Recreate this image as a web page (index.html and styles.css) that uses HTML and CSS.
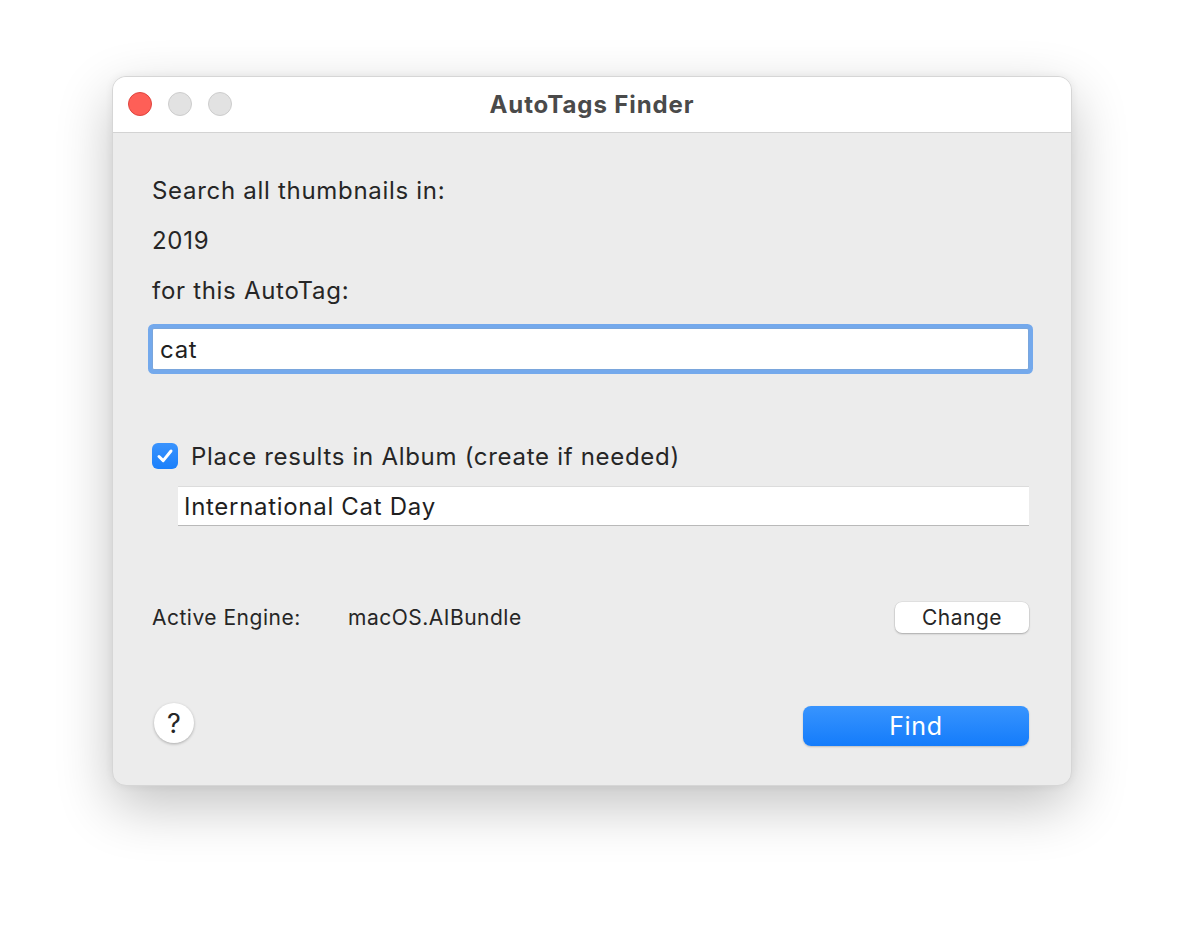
FILE: index.html
```html
<!DOCTYPE html>
<html lang="en">
<head>
    <meta charset="UTF-8">
    <meta name="viewport" content="width=device-width, initial-scale=1.0">
    <title>AutoTags Finder</title>
    <link rel="stylesheet" href="styles.css">
</head>
<body>
    <div class="window">
        <div class="titlebar">
            <div class="lights">
                <span class="light close"></span>
                <span class="light"></span>
                <span class="light"></span>
            </div>
            <div class="title">AutoTags Finder</div>
        </div>
        <div class="content">
            <div class="label">Search all thumbnails in:</div>
            <div class="label">2019</div>
            <div class="label">for this AutoTag:</div>
            <input class="tag-field" type="text" value="cat">

            <label class="check-row">
                <span class="checkbox">
                    <svg width="20" height="20" viewBox="0 0 20 20">
                        <path d="M4 10.5 L8.2 14.6 L16 5" fill="none" stroke="#fff" stroke-width="3" stroke-linecap="round" stroke-linejoin="round"/>
                    </svg>
                </span>
                <span>Place results in Album (create if needed)</span>
            </label>
            <input class="album-field" type="text" value="International Cat Day">

            <div class="engine-row">
                <span class="engine-label">Active Engine:</span>
                <span class="engine-name">macOS.AIBundle</span>
                <button class="btn change">Change</button>
            </div>

            <div class="bottom-row">
                <button class="help">?</button>
                <button class="btn find">Find</button>
            </div>
        </div>
    </div>
</body>
</html>
```
FILE: styles.css
```css
body {
    margin: 0;
    padding: 76px 0 0 112px;
    min-height: 100vh;
    box-sizing: border-box;
    background-color: #fff;
    font-family: Inter, "Noto Sans", sans-serif;
    color: #262626;
}
.window {
    width: 960px;
    height: 710px;
    box-sizing: border-box;
    background-color: #ececec;
    border: 1px solid #d6d6d6;
    border-radius: 14px;
    overflow: hidden;
    box-shadow: 0 20px 55px rgba(0, 0, 0, 0.24), 0 0 8px rgba(0, 0, 0, 0.06);
}
.titlebar {
    position: relative;
    height: 55px;
    background-color: #fff;
    border-bottom: 1px solid #d3d3d3;
    display: flex;
    align-items: center;
    justify-content: center;
}
.lights {
    position: absolute;
    left: 15px;
    top: 15px;
    display: flex;
    gap: 16px;
}
.light {
    width: 22px;
    height: 22px;
    border-radius: 50%;
    background-color: #e2e2e2;
    border: 1px solid #cdcdcd;
}
.light.close {
    background-color: #fe5f57;
    border-color: #e0443e;
}
.title {
    font-size: 24px;
    font-weight: 700;
    letter-spacing: 0.9px;
    color: #4a4a4a;
}
.content {
    padding: 33px 42px 0 39px;
    display: flex;
    flex-direction: column;
    letter-spacing: 0.7px;
}
.label {
    font-size: 24px;
    line-height: 50px;
}
.tag-field {
    margin-top: 12px;
    height: 42px;
    box-sizing: border-box;
    border: 1px solid #7aa6dc;
    border-radius: 2px;
    box-shadow: 0 0 0 4px #74a9ec;
    padding: 0 7px;
    font-family: inherit;
    font-size: 24px;
    letter-spacing: 0.7px;
    color: #1f1f1f;
    outline: none;
}
.check-row {
    margin-top: 73px;
    height: 26px;
    display: flex;
    align-items: center;
    gap: 13px;
    font-size: 24px;
}
.checkbox {
    width: 26px;
    height: 26px;
    border-radius: 6px;
    background: linear-gradient(#3a93fd, #1b80fb);
    display: flex;
    align-items: center;
    justify-content: center;
}
.album-field {
    margin: 17px 0 0 26px;
    height: 40px;
    box-sizing: border-box;
    border: none;
    border-top: 1px solid #dcdcdc;
    border-bottom: 1px solid #b9b9b9;
    background-color: #fff;
    padding: 0 6px;
    font-family: inherit;
    font-size: 24px;
    letter-spacing: 0.7px;
    color: #1f1f1f;
    outline: none;
}
.engine-row {
    margin-top: 76px;
    height: 31px;
    display: flex;
    align-items: center;
    font-size: 21px;
    letter-spacing: 0.5px;
}
.engine-label {
    width: 196px;
}
.engine-name {
    flex: 1;
}
.btn {
    font-family: inherit;
    border: none;
    cursor: pointer;
}
.change {
    width: 134px;
    height: 31px;
    border-radius: 7px;
    background-color: #fff;
    font-size: 21px;
    letter-spacing: 0.5px;
    color: #262626;
    box-shadow: 0 1px 2px rgba(0, 0, 0, 0.25), 0 0 0 0.5px rgba(0, 0, 0, 0.08);
}
.bottom-row {
    margin-top: 70px;
    display: flex;
    align-items: flex-start;
    justify-content: space-between;
}
.help {
    width: 40px;
    height: 40px;
    margin-left: 2px;
    border-radius: 50%;
    border: none;
    background-color: #fff;
    font-family: inherit;
    font-size: 27px;
    color: #262626;
    box-shadow: 0 1px 3px rgba(0, 0, 0, 0.28);
    padding: 0;
}
.find {
    width: 226px;
    height: 40px;
    margin-top: 3px;
    border-radius: 8px;
    background: linear-gradient(#3894fe, #147cfb);
    color: #fff;
    font-size: 25px;
    letter-spacing: 0.7px;
    box-shadow: 0 1px 2px rgba(0, 0, 0, 0.2);
}
```
